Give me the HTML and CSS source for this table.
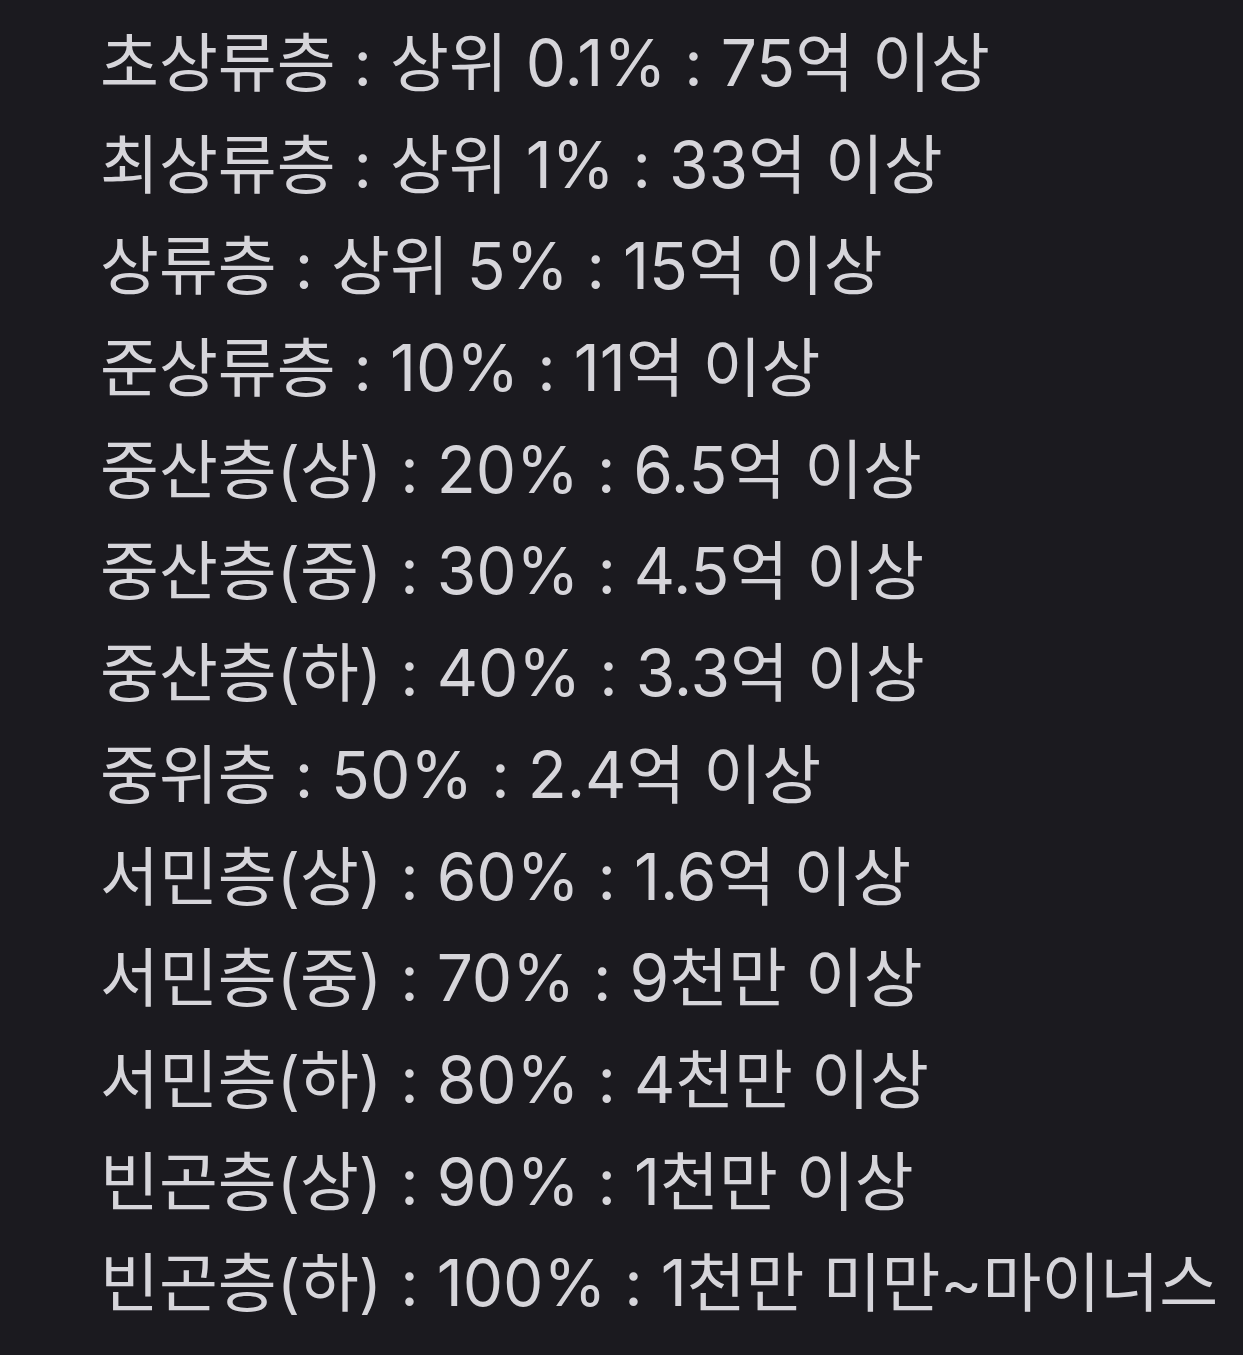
FILE: index.html
```html
<!DOCTYPE html>
<html lang="ko">
<head>
<meta charset="utf-8">
<link rel="stylesheet" href="styles.css">
</head>
<body>
<div class="list">
<p class="row">초상류층 : 상위 0.1% : 75억 이상</p>
<p class="row">최상류층 : 상위 1% : 33억 이상</p>
<p class="row">상류층 : 상위 5% : 15억 이상</p>
<p class="row">준상류층 : 10% : 11억 이상</p>
<p class="row">중산층(상) : 20% : 6.5억 이상</p>
<p class="row">중산층(중) : 30% : 4.5억 이상</p>
<p class="row">중산층(하) : 40% : 3.3억 이상</p>
<p class="row">중위층 : 50% : 2.4억 이상</p>
<p class="row">서민층(상) : 60% : 1.6억 이상</p>
<p class="row">서민층(중) : 70% : 9천만 이상</p>
<p class="row">서민층(하) : 80% : 4천만 이상</p>
<p class="row">빈곤층(상) : 90% : 1천만 이상</p>
<p class="row">빈곤층(하) : 100% : 1천만 미만~마이너스</p>
</div>
</body>
</html>
```
FILE: styles.css
```css
html, body {
  margin: 0;
  padding: 0;
  background: #1b1a1f;
  height: 100%;
}
body {
  overflow: hidden;
}
.list {
  padding: 12px 0 0 100px;
  font-family: "Inter", "Noto Sans CJK KR", sans-serif;
  font-size: 64px;
  font-weight: 400;
  color: #d6d5da;
}
.row {
  margin: 0;
  height: 101.7px;
  line-height: 101.7px;
  white-space: nowrap;
}
```
